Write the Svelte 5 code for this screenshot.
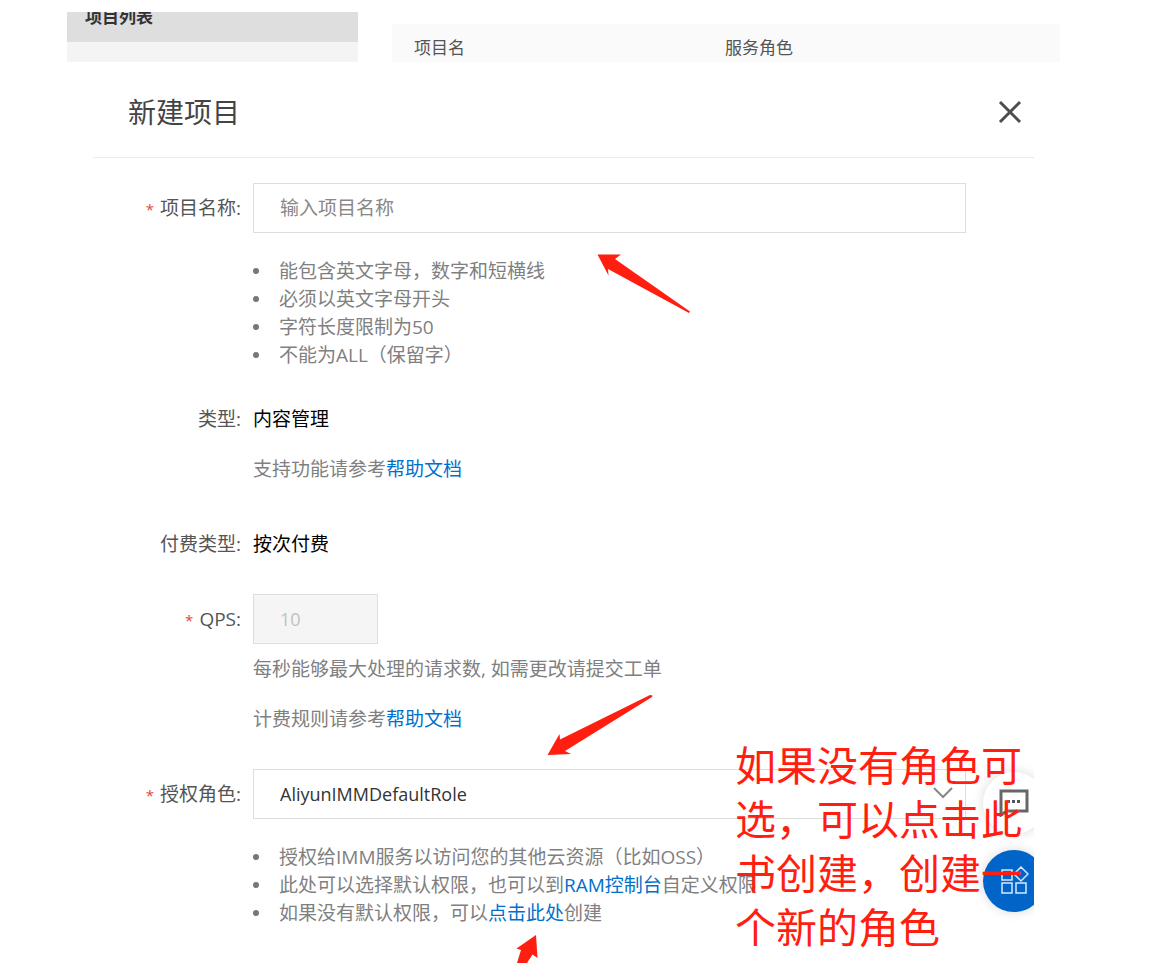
<script>
  const nameRules = [
    '能包含英文字母，数字和短横线',
    '必须以英文字母开头',
    '字符长度限制为50',
    '不能为ALL（保留字）',
  ]

  const roles = ['AliyunIMMDefaultRole']

  let name = ''
  let qps = 10
  let role = roles[0]
</script>

<div class="page">
  <div class="backdrop">
    <nav class="sidebar">
      <a class="current" href="#projects">项目列表</a>
    </nav>
    <table class="projects">
      <thead>
        <tr>
          <th class="name-col">项目名</th>
          <th>服务角色</th>
        </tr>
      </thead>
    </table>
  </div>

  <main class="panel">
    <header>
      <h1>新建项目</h1>
      <button class="close" type="button" aria-label="关闭">
        <svg width="24" height="24" viewBox="0 0 24 24">
          <path d="M2 2L22 22M22 2L2 22" fill="none" stroke="#4a4d52" stroke-width="3" />
        </svg>
      </button>
    </header>

    <form>
      <div class="row">
        <label for="name"><i>*</i>项目名称:</label>
        <div class="field">
          <input id="name" type="text" placeholder="输入项目名称" bind:value={name} />
          <ul>
            {#each nameRules as rule}
              <li>{rule}</li>
            {/each}
          </ul>
        </div>
      </div>

      <div class="row">
        <span class="label">类型:</span>
        <div class="field">
          <p class="value">内容管理</p>
          <p>支持功能请参考<a href="#help">帮助文档</a></p>
        </div>
      </div>

      <div class="row">
        <span class="label">付费类型:</span>
        <div class="field">
          <p class="value">按次付费</p>
        </div>
      </div>

      <div class="row">
        <label for="qps"><i>*</i>QPS:</label>
        <div class="field">
          <input id="qps" class="short" type="text" value={qps} disabled />
          <p>每秒能够最大处理的请求数, 如需更改请提交工单</p>
          <p>计费规则请参考<a href="#billing">帮助文档</a></p>
        </div>
      </div>

      <div class="row">
        <label for="role"><i>*</i>授权角色:</label>
        <div class="field">
          <div class="select">
            <select id="role" bind:value={role}>
              {#each roles as item}
                <option value={item}>{item}</option>
              {/each}
            </select>
            <svg class="chevron" width="20" height="12" viewBox="0 0 20 12">
              <path d="M1 1L10 10L19 1" fill="none" stroke="#888" stroke-width="2" />
            </svg>
          </div>
          <ul>
            <li>授权给IMM服务以访问您的其他云资源（比如OSS）</li>
            <li>此处可以选择默认权限，也可以到<a href="#ram">RAM控制台</a>自定义权限</li>
            <li>如果没有默认权限，可以<a href="#create">点击此处</a>创建</li>
          </ul>
        </div>
      </div>
    </form>

    <div class="floating">
      <button class="chat" type="button" aria-label="咨询">
        <svg width="30" height="28" viewBox="0 0 30 28">
          <path d="M2 2H28V22H8L2 26Z" fill="none" stroke="#666" stroke-width="3" />
          <path d="M8 11h3v3h-3zM13 11h3v3h-3zM18 11h3v3h-3z" fill="#555" />
        </svg>
      </button>
      <button class="apps" type="button" aria-label="应用">
        <svg width="30" height="30" viewBox="0 0 30 30" fill="none" stroke="#d5e8fb" stroke-width="1.5">
          <path d="M3 4H13V14H3ZM3 17H13V27H3ZM17 17H27V27H17ZM22 1L29 8L22 15L15 8Z" />
        </svg>
      </button>
    </div>

    <svg class="arrow to-name" width="94" height="60" viewBox="0 0 94 60">
      <path d="M0.500 0.500H24L18 5L93 57.500L92 59L11 15L11.500 21.500Z" />
    </svg>
    <svg class="arrow to-role" width="106" height="62" viewBox="0 0 106 62">
      <path d="M0.500 61L12.500 40L13 45.500L103 1L105.500 1.500L105 3L18 57L24 60Z" />
    </svg>
    <svg class="arrow to-create" width="22" height="28" viewBox="0 0 22 28">
      <path d="M20 0L0.500 13.500L5 15L1 28H11L16.500 19.500L21.500 23Z" />
    </svg>
    <p class="note">如果没有角色可选，可以点击此书创建，创建一个新的角色</p>
  </main>
</div>

<style>
  :global(body) {
    margin: 0;
    background: #fff;
    color: #555;
    font-family: 'Open Sans', 'Noto Sans CJK SC', sans-serif;
    font-size: 19px;
  }

  .page {
    box-sizing: border-box;
    padding: 12px 101px 0 67px;
  }

  a {
    color: #0070cc;
    text-decoration: none;
  }

  .backdrop {
    display: flex;
    gap: 34px;
    height: 50px;
    overflow: hidden;
    font-size: 17px;
  }

  .sidebar {
    flex: 0 0 291px;
    background: #f4f4f4;
  }

  .current {
    display: flex;
    height: 30px;
    padding-left: 18px;
    background: #dedede;
    color: #333;
    font-weight: bold;
    line-height: 10px;
  }

  .projects {
    flex: 1;
    margin-top: 12px;
    border-collapse: collapse;
    table-layout: fixed;
    background: #fafafa;
  }

  th {
    padding: 0 22px;
    font-weight: normal;
    line-height: 48px;
    text-align: left;
  }

  .name-col {
    width: 267px;
  }

  .panel {
    position: relative;
    box-sizing: border-box;
    min-height: calc(100vh - 62px);
    margin: 0 26px;
    overflow: hidden;
  }

  header {
    display: flex;
    align-items: center;
    justify-content: space-between;
    height: 91px;
    padding: 4px 12px 0 35px;
    border-bottom: 1px solid #ebebeb;
  }

  h1 {
    margin: 0;
    color: #444;
    font-size: 28px;
    font-weight: normal;
    line-height: 40px;
  }

  button {
    display: flex;
    align-items: center;
    justify-content: center;
    padding: 0;
    border: 0;
    background: none;
    cursor: pointer;
  }

  form {
    display: flex;
    flex-direction: column;
    gap: 25px;
    padding: 25px 68px 25px 0;
  }

  .row {
    display: flex;
    gap: 12px;
  }

  label,
  .label {
    flex: 0 0 148px;
    line-height: 50px;
    text-align: right;
  }

  label i {
    margin-right: 6px;
    color: #e0483e;
    font-size: 15px;
    font-style: normal;
  }

  .field {
    flex: 1;
    min-width: 0;
    color: #808080;
  }

  .field p {
    margin: 0;
    line-height: 50px;
  }

  .field .value {
    color: #000;
  }

  input,
  select {
    display: block;
    box-sizing: border-box;
    width: 100%;
    height: 50px;
    padding: 0 26px;
    border: 1px solid #dedede;
    border-radius: 0;
    background: #fff;
    color: #333;
    font: inherit;
    appearance: none;
  }

  select {
    font-size: 18px;
  }

  input::placeholder {
    color: #888;
  }

  input.short {
    width: 125px;
    background: #f5f5f5;
    color: #c1c1c1;
    font-size: 18px;
  }

  .select {
    position: relative;
  }

  .chevron {
    position: absolute;
    top: 18px;
    right: 13px;
    pointer-events: none;
  }

  ul {
    margin: 0;
    padding: 24px 0 0 26px;
    line-height: 28px;
    list-style: none;
  }

  li {
    display: flex;
    align-items: center;
    margin-left: -26px;
    white-space: nowrap;
  }

  li::before {
    content: '';
    width: 6px;
    height: 6px;
    margin-right: 20px;
    border-radius: 50%;
    background: #777;
  }

  .floating {
    position: absolute;
    top: 710px;
    right: -11px;
    display: flex;
    flex-direction: column;
    gap: 16px;
  }

  .floating button {
    width: 62px;
    height: 62px;
    border-radius: 50%;
    box-shadow: 0 0 12px rgba(0, 0, 0, 0.15);
  }

  .chat {
    background: #fff;
  }

  .apps {
    background: #0064c8;
  }

  .arrow {
    position: absolute;
    fill: #ff1e10;
    pointer-events: none;
  }

  .to-name {
    top: 192px;
    left: 504px;
  }

  .to-role {
    top: 632px;
    left: 454px;
  }

  .to-create {
    top: 873px;
    left: 423px;
  }

  .note {
    position: absolute;
    top: 676px;
    right: 8px;
    width: 291px;
    margin: 0;
    color: #ff1e10;
    font-size: 41px;
    line-height: 54px;
  }
</style>
